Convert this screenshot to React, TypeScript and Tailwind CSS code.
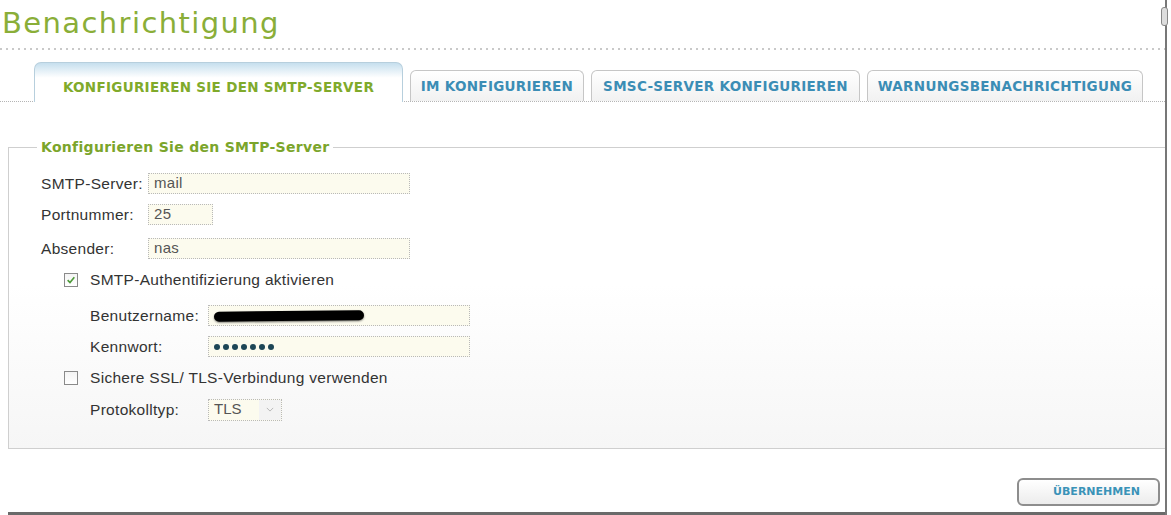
import type { ReactNode } from 'react';

const tabs = [
  { label: 'IM KONFIGURIEREN', width: 'w-[174px]' },
  { label: 'SMSC-SERVER KONFIGURIEREN', width: 'w-[269px]' },
  { label: 'WARNUNGSBENACHRICHTIGUNG', width: 'w-[276px]' },
];

function Field({ width, children }: { width: string; children?: ReactNode }) {
  return (
    <div
      className={`relative flex h-[21px] items-center border border-dotted border-[#b9b9b9] bg-[#fcfbee] pl-[5px] text-[15px] tracking-[0.3px] text-[#555] ${width}`}
    >
      {children}
    </div>
  );
}

function Row({ label, labelWidth, children }: { label: string; labelWidth: string; children: ReactNode }) {
  return (
    <div className="flex h-[31px] items-center">
      <span className={`text-[15.5px] tracking-[0.3px] text-[#333] ${labelWidth}`}>{label}</span>
      {children}
    </div>
  );
}

function Checkbox({ checked }: { checked: boolean }) {
  return (
    <span className="flex h-[14px] w-[14px] items-center justify-center border border-[#8a8a8a] bg-[linear-gradient(#f4f4f4,#fff)]">
      {checked && (
        <svg viewBox="0 0 12 12" className="h-[10px] w-[10px]">
          <path d="M2 6.2 L4.8 9 L10 2.8" fill="none" stroke="#4e9a3a" strokeWidth="2" />
        </svg>
      )}
    </span>
  );
}

export default function App() {
  return (
    <div className="relative h-[515px] w-[1171px] overflow-hidden bg-white font-['Liberation_Sans',Arial,sans-serif]">
      <div className="flex h-[515px] w-[1167px] flex-col border-r-2 border-[#777]">
        <h1 className="h-[48px] pl-[2px] pt-[5px] font-['DejaVu_Sans',Verdana,sans-serif] text-[29px] leading-[36px] tracking-[1.4px] text-[#8aae38]">
          Benachrichtigung
        </h1>
        <div className="h-[2px] bg-[repeating-linear-gradient(90deg,#c9c9c9_0_2px,transparent_2px_6px)]" />

        {/* tab strip */}
        <div className="flex h-[52px] items-end gap-[7px] border-b border-dotted border-[#b5b5b5] pl-[34px] font-['DejaVu_Sans',Verdana,sans-serif] text-[13.5px] font-bold tracking-[0.3px]">
          <div className="relative -mb-px flex h-[40px] w-[369px] items-center justify-center rounded-t-[7px] border border-b-0 border-[#b7cfdd] bg-[linear-gradient(#c6dfee,#ffffff_38%)] pt-[9px] text-[#80aa2b]">
            KONFIGURIEREN SIE DEN SMTP-SERVER
          </div>
          {tabs.map((tab) => (
            <div
              key={tab.label}
              className={`flex h-[31px] items-center justify-center rounded-t-[6px] border border-b-0 border-[#c6c6c6] bg-[linear-gradient(#ffffff,#f1f1f1)] text-[#3b8db5] ${tab.width}`}
            >
              {tab.label}
            </div>
          ))}
        </div>

        <fieldset className="ml-[8px] mt-[37px] h-[310px] border border-r-0 border-[#cfcfcf] bg-[linear-gradient(#ffffff_45%,#f6f6f6)]">
          <legend className="ml-[28px] px-[4px] font-['DejaVu_Sans',Verdana,sans-serif] text-[14px] font-bold leading-[16px] tracking-[0.3px] text-[#7ba52b]">
            Konfigurieren Sie den SMTP-Server
          </legend>
          <div className="flex flex-col pl-[32px] pt-[13px]">
            <Row label="SMTP-Server:" labelWidth="w-[107px]">
              <Field width="w-[262px]">mail</Field>
            </Row>
            <Row label="Portnummer:" labelWidth="w-[107px]">
              <Field width="w-[65px]">25</Field>
            </Row>
            <div className="mt-[3px]">
              <Row label="Absender:" labelWidth="w-[107px]">
                <Field width="w-[262px]">nas</Field>
              </Row>
            </div>
            <div className="flex h-[31px] items-center gap-[12px] pl-[23px]">
              <Checkbox checked />
              <span className="text-[15.5px] tracking-[0.3px] text-[#333]">SMTP-Authentifizierung aktivieren</span>
            </div>
            <div className="mt-[5px] flex flex-col pl-[49px]">
              <Row label="Benutzername:" labelWidth="w-[118px]">
                <Field width="w-[262px]">
                  <span className="h-[10px] w-[150px] -rotate-[0.6deg] rounded-full bg-black shadow-[0_1px_2px_rgba(0,0,0,0.5)]" />
                </Field>
              </Row>
              <Row label="Kennwort:" labelWidth="w-[118px]">
                <Field width="w-[262px]">
                  <span className="flex gap-[3px]">
                    {[0, 1, 2, 3, 4, 5, 6].map((i) => (
                      <span key={i} className="h-[6px] w-[6px] rounded-full bg-[#1d4656]" />
                    ))}
                  </span>
                </Field>
              </Row>
            </div>
            <div className="flex h-[31px] items-center gap-[12px] pl-[23px]">
              <Checkbox checked={false} />
              <span className="text-[15.5px] tracking-[0.3px] text-[#333]">Sichere SSL/ TLS-Verbindung verwenden</span>
            </div>
            <div className="mt-[1px] pl-[49px]">
              <Row label="Protokolltyp:" labelWidth="w-[118px]">
                <div className="flex h-[22px] w-[74px] items-center justify-between border border-dotted border-[#b9b9b9] bg-[#fcfbee] pl-[5px] text-[15px] text-[#555]">
                  <span>TLS</span>
                  <span className="flex h-full w-[22px] items-center justify-center bg-[#f3f3f3]">
                    <svg viewBox="0 0 10 6" className="h-[5px] w-[8px]">
                      <path d="M1 1 L5 5 L9 1" fill="none" stroke="#b5b5b5" strokeWidth="1.2" />
                    </svg>
                  </span>
                </div>
              </Row>
            </div>
          </div>
        </fieldset>

        <div className="mt-[29px] flex justify-end pr-[5px]">
          <button
            type="button"
            className="h-[28px] w-[143px] rounded-[6px] border-2 border-[#8d8d8d] bg-[linear-gradient(#ffffff,#ececec)] pl-[16px] font-['DejaVu_Sans',Verdana,sans-serif] text-[11px] font-bold text-[#3a93b8]"
          >
            ÜBERNEHMEN
          </button>
        </div>

        <div className="ml-[8px] mt-auto h-[3px] bg-[#6a6a6a]" />
      </div>

      {/* scrollbar thumb */}
      <div className="absolute left-[1161px] top-[7px] h-[19px] w-[7px] rounded-[3px] border border-[#888] bg-[#ddd]" />
    </div>
  );
}
